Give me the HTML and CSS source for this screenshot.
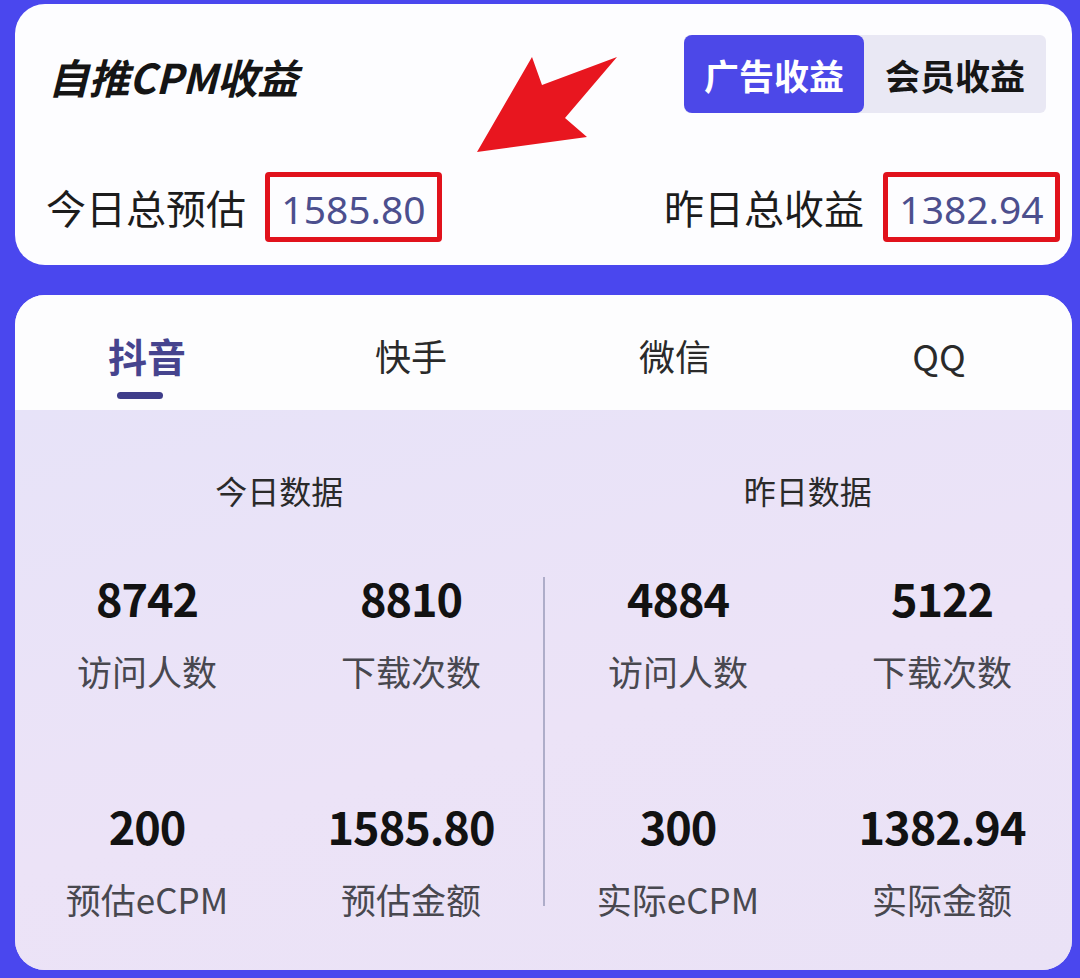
FILE: index.html
```
<!DOCTYPE html>
<html lang="zh-CN">
<head>
<meta charset="utf-8">
<title>自推CPM收益</title>
<link rel="stylesheet" href="styles.css">
</head>
<body>
<div class="page">
  <section class="summary">
    <div class="summary-head">
      <h1 class="title">自推CPM收益</h1>
      <div class="toggle">
        <span class="toggle-btn active">广告收益</span>
        <span class="toggle-btn">会员收益</span>
      </div>
    </div>
    <div class="totals">
      <div class="total">
        <span class="total-label">今日总预估</span>
        <span class="total-value">1585.80</span>
      </div>
      <div class="total">
        <span class="total-label">昨日总收益</span>
        <span class="total-value">1382.94</span>
      </div>
    </div>
    <svg class="arrow" viewBox="0 0 160 115" width="160" height="115">
      <polygon points="7,103 62,8 72,36 147,8 95,69 117,88" fill="#e8161f"/>
    </svg>
  </section>

  <section class="detail">
    <nav class="tabs">
      <div class="tab active">抖音<span class="tab-line"></span></div>
      <div class="tab">快手</div>
      <div class="tab">微信</div>
      <div class="tab">QQ</div>
    </nav>
    <div class="stats">
      <div class="stats-heads">
        <div class="stats-head">今日数据</div>
        <div class="stats-head">昨日数据</div>
      </div>
      <div class="stats-body">
        <div class="half">
          <div class="stat"><div class="num">8742</div><div class="lbl">访问人数</div></div>
          <div class="stat"><div class="num">8810</div><div class="lbl">下载次数</div></div>
          <div class="stat"><div class="num">200</div><div class="lbl">预估eCPM</div></div>
          <div class="stat"><div class="num">1585.80</div><div class="lbl">预估金额</div></div>
        </div>
        <div class="divider"></div>
        <div class="half">
          <div class="stat"><div class="num">4884</div><div class="lbl">访问人数</div></div>
          <div class="stat"><div class="num">5122</div><div class="lbl">下载次数</div></div>
          <div class="stat"><div class="num">300</div><div class="lbl">实际eCPM</div></div>
          <div class="stat"><div class="num">1382.94</div><div class="lbl">实际金额</div></div>
        </div>
      </div>
    </div>
  </section>
</div>
</body>
</html>
```

FILE: styles.css
```
* { box-sizing: border-box; }

html, body {
  margin: 0;
  padding: 0;
}

body {
  width: 1080px;
  height: 978px;
  overflow: hidden;
  background: #4a47ee;
  font-family: "Noto Sans CJK SC", "Noto Sans", sans-serif;
  color: #222;
}

.page {
  padding: 4px 8px 0 15px;
  display: flex;
  flex-direction: column;
  gap: 30px;
}

/* ---------- summary card ---------- */
.summary {
  position: relative;
  height: 261px;
  background: #fdfdff;
  border-radius: 30px;
  padding: 31px 26px 0 33px;
}

.summary-head {
  display: flex;
  justify-content: space-between;
  align-items: center;
  height: 78px;
}

.title {
  margin: 0;
  font-size: 41px;
  font-weight: 700;
  font-style: italic;
  color: #151515;
  letter-spacing: -0.5px;
  line-height: 1;
  padding-top: 4px;
}

.toggle {
  display: flex;
  height: 78px;
  background: #e9e8f4;
  border-radius: 6px;
}

.toggle-btn {
  display: flex;
  align-items: center;
  justify-content: center;
  width: 182px;
  font-size: 35px;
  font-weight: 700;
  color: #161616;
  line-height: 1;
}

.toggle-btn.active {
  width: 180px;
  background: #4c48e8;
  color: #fff;
  border-radius: 8px;
}

.totals {
  display: flex;
  justify-content: space-between;
  align-items: center;
  margin: 59px -14px 0 -2px;
}

.total {
  display: flex;
  align-items: center;
  gap: 19px;
}

.total-label {
  font-size: 40px;
  color: #1c1c1c;
  line-height: 1;
}

.total-value {
  display: flex;
  align-items: center;
  justify-content: center;
  width: 177px;
  height: 70px;
  border: 5px solid #e1121c;
  border-radius: 4px;
  font-family: "Noto Sans", sans-serif;
  font-size: 39px;
  color: #4c4f8e;
  line-height: 1;
  padding-top: 2px;
}

.arrow {
  position: absolute;
  left: 455px;
  top: 45px;
}

/* ---------- detail card ---------- */
.detail {
  height: 675px;
  border-radius: 30px;
  overflow: hidden;
  display: flex;
  flex-direction: column;
  background: #ebe5f8;
}

.tabs {
  display: flex;
  height: 115px;
  background: #fdfdfe;
}

.tab {
  position: relative;
  width: 264px;
  display: flex;
  justify-content: center;
  padding-top: 36px;
  font-size: 36px;
  line-height: 48px;
  color: #2a2a2a;
}

.tab.active {
  color: #46448e;
  font-weight: 700;
  font-size: 39px;
}

.tab-line {
  position: absolute;
  left: 50%;
  top: 97px;
  width: 46px;
  height: 7px;
  margin-left: -30px;
  border-radius: 4px;
  background: #3f3d8a;
}

.stats {
  flex: 1;
  background: linear-gradient(165deg, #e7e3f8 0%, #ece3f7 55%, #eae2f6 100%);
  padding-top: 60px;
}

.stats-heads {
  display: flex;
}

.stats-head {
  flex: 1;
  text-align: center;
  font-size: 32px;
  line-height: 40px;
  color: #2a2a2a;
}

.stats-body {
  display: flex;
  margin-top: 60px;
}

.half {
  width: 528px;
  display: grid;
  grid-template-columns: 264px 264px;
  row-gap: 105px;
}

.half:last-child {
  width: 527px;
  padding-left: 1px;
}

.divider {
  width: 2px;
  margin: 7px 0 15px;
  background: #aeadc9;
  flex: none;
}

.stat {
  display: flex;
  flex-direction: column;
  align-items: center;
}

.num {
  font-size: 45px;
  font-weight: 700;
  line-height: 56px;
  color: #121212;
  letter-spacing: -1px;
}

.lbl {
  margin-top: 23px;
  font-size: 35px;
  line-height: 44px;
  color: #48484f;
}
```
